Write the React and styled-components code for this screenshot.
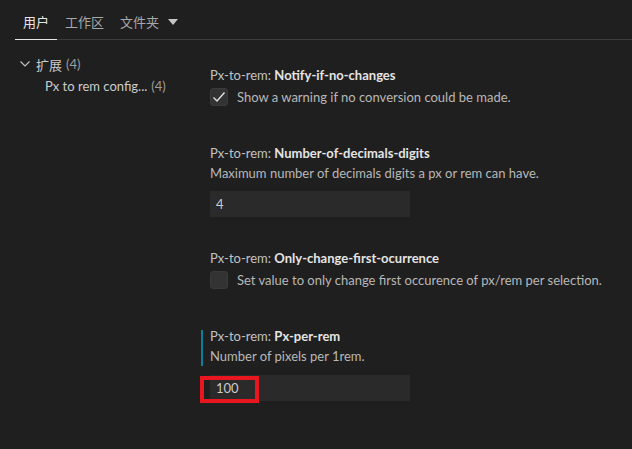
import React from "react";
import styled, { createGlobalStyle } from "styled-components";

const Global = createGlobalStyle`
  html, body { margin: 0; padding: 0; background: #1f1f1f; }
  body {
    width: 632px; height: 449px; overflow: hidden;
    font-family: "Lato", "Noto Sans CJK SC", sans-serif;
    font-size: 13px; color: #cccccc;
  }
`;

const Page = styled.div`
  width: 632px;
  height: 449px;
  background: #1f1f1f;
  display: flex;
  flex-direction: column;
`;

const TabBar = styled.div`
  margin-left: 15px;
  height: 40px;
  display: flex;
  align-items: stretch;
  border-bottom: 1px solid #3c3c3c;
  box-sizing: border-box;
`;

const Tab = styled.div`
  padding: 4px 8px 0;
  display: flex;
  align-items: center;
  gap: 9px;
  font-family: "Noto Sans CJK SC", sans-serif;
  font-size: 13px;
  color: ${(p) => (p.$active ? "#e7e7e7" : "#a8a8a8")};
  margin-bottom: -1px;
  border-bottom: 1px solid ${(p) => (p.$active ? "#e7e7e7" : "transparent")};
`;

const Body = styled.div`
  display: flex;
  flex: 1;
`;

const Tree = styled.div`
  width: 200px;
  padding-top: 13px;
  box-sizing: border-box;
`;

const TreeRow = styled.div`
  height: 22px;
  display: flex;
  align-items: center;
  padding-left: ${(p) => p.$indent}px;
  gap: 4px;
  white-space: nowrap;
  color: #cccccc;
`;

const Count = styled.span`
  color: #9d9d9d;
`;

const Cjk = styled.span`
  font-family: "Noto Sans CJK SC", sans-serif;
`;

const Chevron = styled.svg`
  width: 12px;
  height: 12px;
  margin-right: 1px;
`;

const List = styled.div`
  flex: 1;
  padding-top: 14px;
`;

const Item = styled.div`
  padding: 12px 0 20px 10px;
`;

const Header = styled.div`
  position: relative;
  &::before {
    content: "";
    display: ${(p) => (p.$modified ? "block" : "none")};
    position: absolute;
    left: -9px;
    top: 3px;
    bottom: -1px;
    width: 2px;
    background: #0c7d9d;
  }
`;

const Title = styled.div`
  height: 18px;
  line-height: 18px;
  white-space: nowrap;
  color: #c2c2c2;
  b {
    font-weight: 700;
    color: #e4e4e4;
  }
`;

const Desc = styled.div`
  margin-top: 2px;
  height: 18px;
  line-height: 18px;
  color: #b8b8b8;
  white-space: nowrap;
`;

const BoolRow = styled.div`
  margin-top: 4px;
  margin-bottom: 6px;
  display: flex;
  align-items: center;
  gap: 9px;
  color: #b8b8b8;
  white-space: nowrap;
`;

const Box = styled.div`
  width: 18px;
  height: 18px;
  box-sizing: border-box;
  border-radius: 3px;
  background: #333333;
  border: 1px solid #3a3a3a;
  display: flex;
  align-items: center;
  justify-content: center;
`;

const InputWrap = styled.div`
  position: relative;
  margin-top: ${(p) => p.$mt}px;
  width: 200px;
`;

const Input = styled.div`
  height: 26px;
  line-height: 26px;
  padding-left: 6px;
  background: #2a2a2a;
  color: #cccccc;
`;

const Mark = styled.div`
  position: absolute;
  left: -10px;
  top: 1px;
  width: 59px;
  height: 27px;
  box-sizing: border-box;
  border: 4px solid #e8161e;
`;

function Check() {
  return (
    <svg width="16" height="16" viewBox="0 0 16 16">
      <path d="M2.5 8.5 L6 12 L13.5 3.5" fill="none" stroke="#e0e0e0" strokeWidth="1.4" />
    </svg>
  );
}

export default function App() {
  return (
    <Page>
      <Global />
      <TabBar>
        <Tab $active>用户</Tab>
        <Tab>工作区</Tab>
        <Tab>
          文件夹
          <svg width="10" height="6" viewBox="0 0 10 6">
            <path d="M0 0 L10 0 L5 6 Z" fill="#c5c5c5" />
          </svg>
        </Tab>
      </TabBar>
      <Body>
        <Tree>
          <TreeRow $indent={19}>
            <Chevron viewBox="0 0 12 12">
              <path d="M1.5 3.5 L6 8 L10.5 3.5" fill="none" stroke="#c5c5c5" strokeWidth="1.1" />
            </Chevron>
            <Cjk>扩展</Cjk>
            <Count>(4)</Count>
          </TreeRow>
          <TreeRow $indent={45}>
            Px to rem config... <Count>(4)</Count>
          </TreeRow>
        </Tree>
        <List>
          <Item>
            <Header>
              <Title>Px-to-rem: <b>Notify-if-no-changes</b></Title>
            </Header>
            <BoolRow>
              <Box><Check /></Box>
              Show a warning if no conversion could be made.
            </BoolRow>
          </Item>
          <Item>
            <Header>
              <Title>Px-to-rem: <b>Number-of-decimals-digits</b></Title>
              <Desc>Maximum number of decimals digits a px or rem can have.</Desc>
            </Header>
            <InputWrap $mt={9}>
              <Input>4</Input>
            </InputWrap>
          </Item>
          <Item>
            <Header>
              <Title>Px-to-rem: <b>Only-change-first-ocurrence</b></Title>
            </Header>
            <BoolRow>
              <Box />
              Set value to only change first occurence of px/rem per selection.
            </BoolRow>
          </Item>
          <Item>
            <Header $modified>
              <Title>Px-to-rem: <b>Px-per-rem</b></Title>
              <Desc>Number of pixels per 1rem.</Desc>
            </Header>
            <InputWrap $mt={10}>
              <Input>100</Input>
              <Mark />
            </InputWrap>
          </Item>
        </List>
      </Body>
    </Page>
  );
}
